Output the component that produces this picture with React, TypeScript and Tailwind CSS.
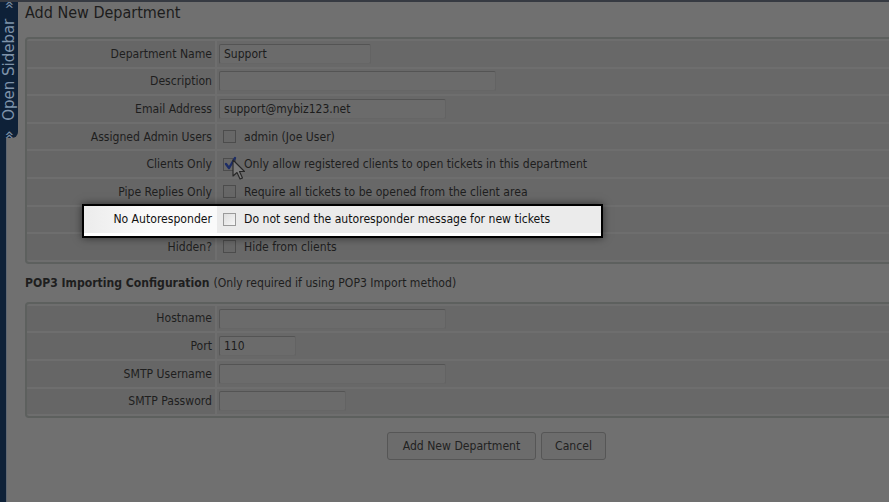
import React from "react";

const Input = ({ w, value }: { w: string; value?: string }) => (
  <div
    className={`${w} h-[20px] flex items-center pl-[4px] bg-[#6b6b6b] border border-t-[#545454] border-l-[#565656] border-r-[#636363] border-b-[#666666] rounded-[2px] text-[12px] text-[#1c1c1c]`}
  >
    {value}
  </div>
);

const Check = ({ checked, light }: { checked?: boolean; light?: boolean }) => (
  <div
    className={`relative w-[13px] h-[13px] border ${
      light ? "border-[#9a9a9a] bg-gradient-to-br from-[#dedede] to-[#f6f6f6]" : "border-[#4c4c4c] bg-[#676767]"
    } shrink-0`}
  >
    {checked && (
      <svg className="absolute -left-[1px] -top-[3px]" width="14" height="15" viewBox="0 0 14 15">
        <path d="M3 8 L6 12 L12 2" fill="none" stroke="#1d2d66" strokeWidth="2.4" strokeLinecap="round" strokeLinejoin="round" />
      </svg>
    )}
  </div>
);

const CheckField = ({ text, checked }: { text: string; checked?: boolean }) => (
  <div className="flex items-center gap-[8px] pl-[6px]">
    <Check checked={checked} />
    <span>{text}</span>
  </div>
);

const Row = ({ label, children }: { label: string; children?: React.ReactNode }) => (
  <div className="flex h-[25.6px] gap-[2px]">
    <div className="w-[188px] shrink-0 bg-[#666666] flex items-center justify-end pr-[3px]">{label}</div>
    <div className="flex-1 bg-[#686868] flex items-center">{children}</div>
  </div>
);

export default function App() {
  return (
    <div className="relative w-[889px] h-[502px] overflow-hidden bg-[#707070] border-t-2 border-[#363a42] font-['DejaVu_Sans',sans-serif] [font-stretch:condensed] text-[12.1px] text-[#1e1e1e]">
      <div className="flex h-full">
        <div className="w-[7px] shrink-0 h-full bg-[#0e2138] border-r border-[#5f6670]" />
        <div className="pl-[18px] flex-1">
          <div className="h-[35px]">
            <div className="text-[16px] leading-[20px] pt-[1px] text-[#1c1c1c]">Add New Department</div>
          </div>

          <div className="w-[880px] border-2 border-[#5d605e] rounded-[4px] bg-[#6e6e6e] py-[2px] flex flex-col gap-[2px]">
            <Row label="Department Name">
              <div className="pl-[2px]"><Input w="w-[152px]" value="Support" /></div>
            </Row>
            <Row label="Description">
              <div className="pl-[2px]"><Input w="w-[277px]" /></div>
            </Row>
            <Row label="Email Address">
              <div className="pl-[2px]"><Input w="w-[227px]" value="support@mybiz123.net" /></div>
            </Row>
            <Row label="Assigned Admin Users">
              <CheckField text="admin (Joe User)" />
            </Row>
            <Row label="Clients Only">
              <CheckField text="Only allow registered clients to open tickets in this department" checked />
            </Row>
            <Row label="Pipe Replies Only">
              <CheckField text="Require all tickets to be opened from the client area" />
            </Row>
            <div className="relative h-[25.6px]">
              <div className="absolute left-[55px] -top-[3px] w-[521px] h-[34px] border-2 border-black bg-[#f7f7f7] shadow-[0_0_8px_rgba(0,0,0,0.55)] z-10 flex flex-col">
                <div className="flex h-[27px]">
                  <div className="w-[133px] shrink-0 flex items-center justify-end pr-[5px] text-[#111] bg-gradient-to-r from-[#ececec] via-[#fafafa] to-[#fafafa]">
                    No Autoresponder
                  </div>
                  <div className="flex-1 bg-[#ebebeb] flex items-center gap-[8px] pl-[6px] text-[#111]">
                    <Check light />
                    <span>Do not send the autoresponder message for new tickets</span>
                  </div>
                </div>
                <div className="flex-1 bg-white" />
              </div>
              <div className="flex h-full gap-[2px]">
                <div className="w-[188px] bg-[#666666]" />
                <div className="flex-1 bg-[#686868]" />
              </div>
            </div>
            <Row label="Hidden?">
              <CheckField text="Hide from clients" />
            </Row>
          </div>

          <div className="mt-[8px] h-[22px] flex items-center">
            <span className="font-bold">POP3 Importing Configuration</span>
            <span className="ml-[4px]">(Only required if using POP3 Import method)</span>
          </div>

          <div className="mt-[8px] w-[880px] border-2 border-[#5d605e] rounded-[4px] bg-[#6e6e6e] py-[2px] flex flex-col gap-[2px]">
            <Row label="Hostname">
              <div className="pl-[2px]"><Input w="w-[227px]" /></div>
            </Row>
            <Row label="Port">
              <div className="pl-[2px]"><Input w="w-[77px]" value="110" /></div>
            </Row>
            <Row label="SMTP Username">
              <div className="pl-[2px]"><Input w="w-[227px]" /></div>
            </Row>
            <Row label="SMTP Password">
              <div className="pl-[2px]"><Input w="w-[127px]" /></div>
            </Row>
          </div>

          <div className="mt-[14px] flex gap-[5px] pl-[362px]">
            <div className="w-[149px] h-[28px] flex items-center justify-center rounded-[3px] border border-[#565656] bg-[#6c6c6c] text-[#222]">
              Add New Department
            </div>
            <div className="w-[65px] h-[28px] flex items-center justify-center rounded-[3px] border border-[#565656] bg-[#6c6c6c] text-[#222]">
              Cancel
            </div>
          </div>
        </div>
      </div>

      <div className="absolute left-0 top-0 w-[18px] h-[136px] bg-[#0e2138] rounded-br-[6px] flex items-center justify-center">
        <span className="[writing-mode:vertical-rl] rotate-180 [font-stretch:normal] text-[15px] leading-[18px] text-[#7f93aa] whitespace-nowrap">
          »&nbsp;&nbsp;Open Sidebar&nbsp;&nbsp;»
        </span>
      </div>

      <svg className="absolute left-[232px] top-[157px]" width="14" height="22" viewBox="0 0 14 22">
        <path d="M1 1 L1 17 L5 13.5 L8 20 L10.5 19 L7.5 12.5 L12.5 12.5 Z" fill="#7b7b7b" stroke="#262626" strokeWidth="1.1" strokeLinejoin="round" />
      </svg>
    </div>
  );
}
